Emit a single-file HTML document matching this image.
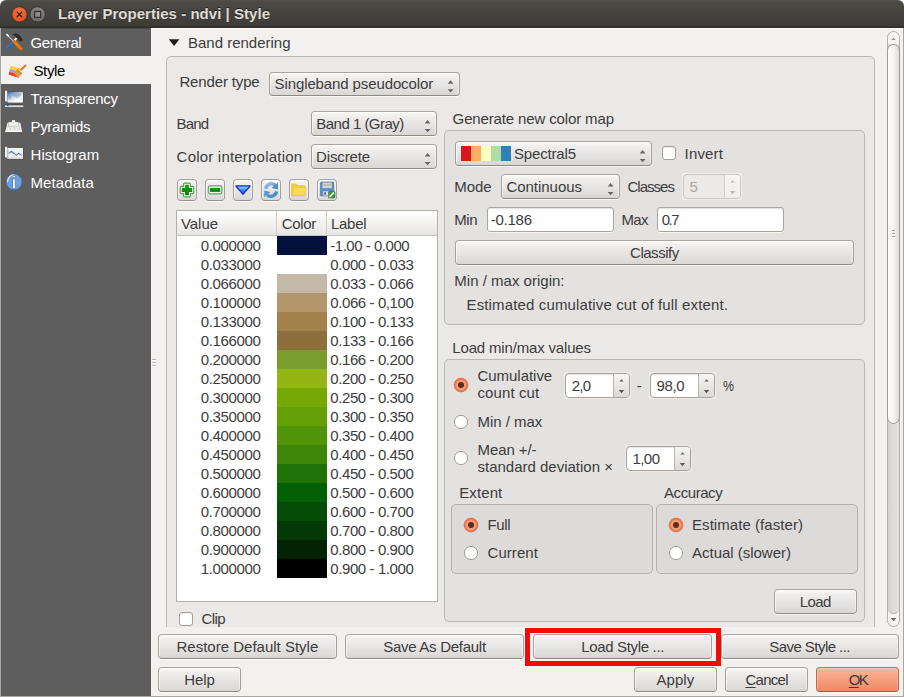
<!DOCTYPE html>
<html><head><meta charset="utf-8"><title>Layer Properties - ndvi | Style</title>
<style>
html,body{margin:0;padding:0}
body{width:904px;height:697px;position:relative;overflow:hidden;background:#f2f1f0;font-family:"Liberation Sans",sans-serif}
.t{position:absolute;height:20px;line-height:20px;white-space:pre}
u{text-decoration:underline;text-underline-offset:2px}
#title{position:absolute;left:0;top:0;width:904px;height:28px;background:linear-gradient(#52514b 0,#4b4a45 2px,#3c3b37 26px,#2e2d2a 27px,#2e2d2a 28px);border-radius:6px 6px 0 0}
.wb{position:absolute;top:6px;width:16px;height:16px;border-radius:50%;box-sizing:border-box}
.wb svg{position:absolute;left:-1px;top:-1px}
.close{left:11px;background:radial-gradient(circle at 50% 30%,#f0693e,#e64c1b);border:1px solid #3a2a22;top:6px}
.maxi{left:29px;background:linear-gradient(#85837d,#6c6a65);border:1px solid #33322e}
#side{position:absolute;left:0;top:28px;width:151px;height:669px;background:#5e5e5e}
#sel{position:absolute;left:0;top:56px;width:151px;height:28px;background:#f2f1f0}
#gb0{position:absolute;left:166px;top:56px;width:709px;height:600px;background:#eae9e8;border:1px solid #bcbab6;border-radius:5px;box-sizing:border-box}
.gb1{position:absolute;background:#e3e2e1;border:1px solid #b9b7b3;border-radius:5px;box-sizing:border-box}
.gb2{position:absolute;background:#dcdbda;border:1px solid #b4b2ae;border-radius:5px;box-sizing:border-box}
.btn{position:absolute;box-sizing:border-box;border:1px solid;border-color:#a9a59f #a4a09a #8e8a84;border-radius:4px;background:linear-gradient(#fafaf9 0,#f0efee 18%,#e5e3e1 60%,#d9d7d4 100%);box-shadow:inset 1px 1px 0 rgba(255,255,255,.65),inset -1px 0 0 rgba(255,255,255,.45),0 1px 0 rgba(255,255,255,.75)}
.btn.tb{border-radius:4px;border-color:#a8a49e #a39f99 #95918b}
.btn.ok{border-color:#bb7257 #b66a4e #a65a3e;background:linear-gradient(#fcb69b 0,#f8a888 30%,#f39570 70%,#ef8a62 100%);box-shadow:inset 1px 1px 0 rgba(255,255,255,.25),inset -1px 0 0 rgba(255,255,255,.2),0 1px 0 rgba(255,255,255,.75)}
.inp{position:absolute;box-sizing:border-box;border:1px solid #aaa69f;border-radius:3px;background:#fff;box-shadow:inset 0 1px 1px rgba(0,0,0,.12),0 1px 0 rgba(255,255,255,.7)}
.halo{position:absolute;box-sizing:border-box;border-radius:2px;background:#ecebe9}
.halo.dis{background:#efeeed}
.spin{position:absolute;box-sizing:border-box;border:1px solid #a6a29b;border-radius:4px;background:#fff;box-shadow:inset 0 1px 1px rgba(0,0,0,.10)}
.spin.dis{background:#ebeae9;border-color:#cbc8c4;box-shadow:none}
.spb{position:absolute;box-sizing:border-box;border-left:1px solid #b9b5af;border-radius:0 3px 3px 0;background:linear-gradient(#f7f6f5,#e9e7e5 50%,#dcdad7)}
.spb.dis{border-left-color:#d0cdc9;background:linear-gradient(#f6f5f4,#efeeed)}
.chk{position:absolute;box-sizing:border-box;border:1px solid #a59f98;border-radius:3px;background:#fff;box-shadow:inset 0 1px 1px rgba(0,0,0,.08)}
.rad{position:absolute;width:14px;height:14px;box-sizing:border-box;border:1px solid #a19d96;border-radius:50%;background:linear-gradient(#fff,#f4f3f2)}
.rad.on{border-color:#b5532f;background:radial-gradient(circle,#f59a76 0,#ee7c53 70%,#e86f45 100%)}
.rad.on i{position:absolute;left:3px;top:3px;width:6px;height:6px;border-radius:50%;background:#4a2a1e}
#tbl{position:absolute;left:176px;top:210px;width:262px;height:392px;box-sizing:border-box;border:1px solid #b3afa9;background:#fff}
#th{position:absolute;left:177px;top:211px;width:260px;height:24px;background:linear-gradient(#ffffff,#f3f2f1 50%,#e6e5e3);border-bottom:1px solid #c4c1bc}
.vs{position:absolute;top:211px;width:1px;height:24px;background:#cfccc8}
.sw{position:absolute;left:277px;width:50px;height:19px}
#sbout{position:absolute;left:887px;top:31px;width:13px;height:596px;box-sizing:border-box;border:1px solid #b3afa9;border-radius:7px;background:#f5f4f3}
#sbtrack{position:absolute;left:888px;top:44px;width:11px;height:570px;box-sizing:border-box;border-radius:0 0 6px 6px;border-bottom:1px solid #b9b5af;background:linear-gradient(90deg,#d4d1ce,#dedbd8 50%,#e3e1de)}
#sbthumb{position:absolute;left:887px;top:44px;width:13px;height:380px;box-sizing:border-box;border:1px solid #9f9b95;border-radius:7px;background:linear-gradient(90deg,#ffffff,#f4f3f2 50%,#dfddda)}
#foot{position:absolute;left:152px;top:627px;width:751px;height:69px;background:#f2f1f0}
#red{position:absolute;left:525px;top:628px;width:196px;height:38px;box-sizing:border-box;border:5px solid #f00a0a}
#frame{position:absolute;left:0;top:28px;width:904px;height:669px;box-sizing:border-box;border:1px solid #a9a7a2;border-top:none;pointer-events:none}
</style></head>
<body>
<div style="position:absolute;left:0;top:0;width:904px;height:8px;background:#fff"></div>
<div id="title"></div>
<div style="position:absolute;left:151px;top:28px;width:752px;height:1px;background:#fcfcfb"></div>
<svg style="position:absolute;left:8px;top:3px" width="42" height="23" viewBox="8 3 42 23"><defs><radialGradient id="gcl" cx="0.5" cy="0.3" r="0.8"><stop offset="0" stop-color="#f3744a"/><stop offset="1" stop-color="#e2491a"/></radialGradient><linearGradient id="gmx" x1="0" y1="0" x2="0" y2="1"><stop offset="0" stop-color="#8a8882"/><stop offset="1" stop-color="#6b6964"/></linearGradient></defs><circle cx="19.45" cy="14.4" r="7.7" fill="url(#gcl)" stroke="#35302b" stroke-width="0.9"/><path d="M16.7 11.6 L22.2 17.2 M22.2 11.6 L16.7 17.2" stroke="#3a140a" stroke-width="1.3" fill="none"/><circle cx="37.6" cy="14.4" r="7.7" fill="url(#gmx)" stroke="#302f2b" stroke-width="0.9"/><rect x="34.6" y="11.4" width="6" height="6" fill="#8e8c86" stroke="#32312d" stroke-width="1.2"/></svg>
<span class="t" style="left:58px;top:4px;font-size:15px;color:#dfdbd2;font-weight:700;letter-spacing:0.035px;text-shadow:0 -1px 0 rgba(0,0,0,.5);">Layer Properties - ndvi | Style</span>
<div id="side"></div>
<div style="position:absolute;left:0;top:28px;width:151px;height:1px;background:#4e4e4e"></div>
<div id="sel"></div>
<span class="t" style="left:30.5px;top:32.5px;font-size:15px;color:#fff;letter-spacing:-0.362px;">General</span>
<span class="t" style="left:33.4px;top:60.5px;font-size:15px;color:#000;letter-spacing:-0.340px;">Style</span>
<span class="t" style="left:30.5px;top:88.5px;font-size:15px;color:#fff;letter-spacing:-0.341px;">Transparency</span>
<span class="t" style="left:30.5px;top:116.5px;font-size:15px;color:#fff;letter-spacing:-0.345px;">Pyramids</span>
<span class="t" style="left:30.5px;top:144.5px;font-size:15px;color:#fff;letter-spacing:0.043px;">Histogram</span>
<span class="t" style="left:30.5px;top:172.5px;font-size:15px;color:#fff;letter-spacing:0.108px;">Metadata</span>
<svg style="position:absolute;left:0;top:28px" width="30" height="168" viewBox="0 28 30 168">
<defs>
<linearGradient id="gtr" x1="0" y1="0" x2="0.7" y2="1"><stop offset="0" stop-color="#3565b2"/><stop offset="0.3" stop-color="#8aa5cd"/><stop offset="0.6" stop-color="#dfe5ec"/><stop offset="0.85" stop-color="#ffffff"/></linearGradient>
<linearGradient id="gbl" x1="0" y1="0" x2="1" y2="1"><stop offset="0" stop-color="#4f86c6"/><stop offset="1" stop-color="#1f4a8a"/></linearGradient>
</defs>
<!-- General: hammer + screwdriver -->
<path d="M12.2 34.2 C15.5 32.4 19.6 33.6 21.3 37.6 L22.6 39.8 L22.2 41 L20.2 41.6 L18.6 40.4 C18.6 39.2 17.8 38.3 16.8 38.2 L15.4 36.6 C14.6 35.4 13.4 34.8 12.2 34.2 Z" fill="#2b2e30"/>
<path d="M13.6 41.4 L16.6 38.2" stroke="#f4f4f2" stroke-width="1.9" stroke-linecap="butt"/>
<path d="M13 42.8 L7.7 48.2" stroke="url(#gbl)" stroke-width="3.1" stroke-linecap="round"/>
<path d="M7.6 35.4 L13.2 40.9" stroke="#f2f2f2" stroke-width="0.9"/>
<path d="M6.9 34.5 L8.3 35.9" stroke="#ffffff" stroke-width="1.7" stroke-linecap="round"/>
<path d="M14 41.4 L21 48.7" stroke="#f47408" stroke-width="3.1" stroke-linecap="round"/>
<!-- Style: flag + brush -->
<path d="M10.4 65.8 L20.8 68.6 L20.2 71.6 L9.8 69 Z" fill="#fbd037"/>
<path d="M9.8 69 L20.2 71.6 L19.6 74.4 L9.2 71.8 Z" fill="#a2a4c6"/>
<path d="M9.2 71.8 L19.6 74.4 L18.6 77.8 L8.8 74.8 Z" fill="#ee3b2c"/>
<path d="M21.2 69.6 L25.4 65.6" stroke="#d38a32" stroke-width="2.2" stroke-linecap="round"/>
<path d="M17.4 69.2 L22.2 73.6 L18.2 77.8 L13.8 73.2 Z" fill="#e3994a"/>
<path d="M17.4 69.2 L22.2 73.6 L21.4 74.6 L16.6 70.2 Z" fill="#cf8228"/>
<!-- Transparency -->
<rect x="6.8" y="91.2" width="16.8" height="12" fill="#4e4e4e"/>
<rect x="7.4" y="91.8" width="15.6" height="10.8" fill="url(#gtr)"/>
<path d="M13.2 94.4 q1.6 -1.2 3.4 -0.6 q1.8 -1 3.6 -0.4 q1.4 0.6 0.8 2 q-0.8 1.4 -2.4 1.2 q-0.6 1.6 -1.8 2.2 q-1 -0.6 -1 -2 q-1.6 -0.2 -2.6 -1 z M9.2 96.2 q1 -0.6 1.8 0.2 q0.4 1.6 -0.4 3 q-1 -0.6 -1.2 -1.6 z M20.4 98.6 q0.8 -0.4 1.2 0.4 q-0.2 0.9 -1 0.9 z" fill="#8d9ca6" opacity="0.55"/>
<rect x="5" y="90.8" width="2.2" height="10.6" fill="#efefef"/>
<rect x="5" y="104" width="18.4" height="3" fill="#4a4a4a"/>
<rect x="5" y="105.2" width="18.4" height="1.9" fill="#d4d4d4"/>
<rect x="7" y="103.2" width="1.4" height="3" fill="#2c54a0"/>
<!-- Pyramids -->
<path d="M7.4 122.8 L20.4 122.8 L22.2 132 L5.2 132 Z" fill="#e9e9e7"/>
<path d="M8.6 122 L18.4 122 L18.4 126.2 L8.6 126.2 Z" fill="#f1f1ef" stroke="#9c9c9a" stroke-width="0.5"/>
<path d="M11.9 121 C11.9 119.6 15.2 119.6 15.2 121 L15.2 122.3 L11.9 122.3 Z" fill="#f4f4f2"/>
<path d="M5.6 130.6 L21.8 130.6 L22.2 132 L5.2 132 Z" fill="#fafaf8"/>
<path d="M10.2 127.5 L10.6 130 M14.6 127 L14.6 130 M19.4 127.5 L19 130" stroke="#c4c4c2" stroke-width="0.8"/>
<!-- Histogram -->
<rect x="6.8" y="147.2" width="16.8" height="12.2" fill="#4c4c4c"/>
<rect x="7.4" y="147.9" width="15.6" height="11" fill="#f3f3f2"/>
<rect x="7.4" y="157.6" width="15.6" height="1.3" fill="#d2d2d0"/>
<rect x="5" y="146.8" width="2.2" height="10.6" fill="#efefef"/>
<rect x="7.2" y="148.6" width="1.2" height="9" fill="#bdbdbb"/>
<path d="M8.6 153.7 L11.3 151.3 L13.7 153 L16.5 155.3 L18.7 153.2 L21.7 155.4" fill="none" stroke="#5b7db9" stroke-width="1.1"/>
<!-- Metadata -->
<circle cx="14.1" cy="181.9" r="8" fill="#6f9fd8" stroke="#3b68ab" stroke-width="0.9"/>
<path d="M7.6 181.5 C7.8 177.6 10.6 175 13.4 174.8" fill="none" stroke="#e6eefa" stroke-width="1.1" stroke-linecap="round"/>
<rect x="12.6" y="178.9" width="2.9" height="9.6" fill="#3f6fb3"/>
<rect x="13" y="179.3" width="2.1" height="8.9" fill="#f4f2ee"/>
<rect x="12.8" y="175.3" width="2.5" height="2.1" fill="#3f6fb3" rx="0.5"/>
<rect x="13.1" y="175.7" width="1.9" height="1.5" fill="#f4f2ee"/>
</svg>

<div id="gb0"></div>
<svg style="position:absolute;left:168px;top:38px" width="13" height="9" viewBox="168 38 13 9"><path d="M168.8 39.2 L179.4 39.2 L174.1 46 Z" fill="#1c1c1c"/></svg>
<span class="t" style="left:188px;top:32.5px;font-size:15px;color:#3c3c3c;letter-spacing:-0.006px;">Band rendering</span>
<span class="t" style="left:179.4px;top:72px;font-size:15px;color:#3c3c3c;letter-spacing:-0.142px;">Render type</span>
<div class="btn" style="left:269px;top:72px;width:191px;height:24px;"></div>
<svg style="position:absolute;left:444px;top:72px" width="14" height="24" viewBox="444 72 14 24"><path d="M450.6 80.2 L453.5 83.7 L447.70000000000005 83.7 Z M447.70000000000005 89.2 L453.5 89.2 L450.6 92.6 Z" fill="#666666"/></svg>
<span class="t" style="left:274.6px;top:74px;font-size:15px;color:#3c3c3c;letter-spacing:-0.113px;">Singleband pseudocolor</span>
<span class="t" style="left:176.6px;top:114px;font-size:15px;color:#3c3c3c;letter-spacing:-0.849px;">Band</span>
<div class="btn" style="left:311px;top:111px;width:126px;height:25px;"></div>
<svg style="position:absolute;left:421px;top:111px" width="14" height="25" viewBox="421 111 14 25"><path d="M427.6 119.9 L430.5 123.4 L424.70000000000005 123.4 Z M424.70000000000005 128.9 L430.5 128.9 L427.6 132.3 Z" fill="#666666"/></svg>
<span class="t" style="left:316.3px;top:113.5px;font-size:15px;color:#3c3c3c;letter-spacing:-0.518px;">Band 1 (Gray)</span>
<span class="t" style="left:176.6px;top:147px;font-size:15px;color:#3c3c3c;letter-spacing:0.208px;">Color interpolation</span>
<div class="btn" style="left:311px;top:144px;width:126px;height:25px;"></div>
<svg style="position:absolute;left:421px;top:144px" width="14" height="25" viewBox="421 144 14 25"><path d="M427.6 152.9 L430.5 156.4 L424.70000000000005 156.4 Z M424.70000000000005 161.9 L430.5 161.9 L427.6 165.3 Z" fill="#666666"/></svg>
<span class="t" style="left:316px;top:146.5px;font-size:15px;color:#3c3c3c;letter-spacing:-0.131px;">Discrete</span>
<div class="btn tb" style="left:177px;top:179px;width:20px;height:22px;"></div>
<div class="btn tb" style="left:205px;top:179px;width:20px;height:22px;"></div>
<div class="btn tb" style="left:233px;top:179px;width:20px;height:22px;"></div>
<div class="btn tb" style="left:261px;top:179px;width:20px;height:22px;"></div>
<div class="btn tb" style="left:289px;top:179px;width:20px;height:22px;"></div>
<div class="btn tb" style="left:317px;top:179px;width:20px;height:22px;"></div>
<svg style="position:absolute;left:177px;top:179px" width="162" height="22" viewBox="177 179 162 22">
<defs>
<linearGradient id="gg" x1="0" y1="0" x2="0" y2="1"><stop offset="0" stop-color="#12a612"/><stop offset="1" stop-color="#067c06"/></linearGradient>
<linearGradient id="gb" x1="0" y1="0" x2="0" y2="1"><stop offset="0" stop-color="#62b6ff"/><stop offset="0.5" stop-color="#2f8cff"/><stop offset="1" stop-color="#1668f6"/></linearGradient>
<linearGradient id="gr" x1="0" y1="0" x2="1" y2="1"><stop offset="0" stop-color="#9cc4ec"/><stop offset="1" stop-color="#4785cc"/></linearGradient>
</defs>
<!-- plus -->
<path d="M184.6 183.1 h4.8 q1 0 1 1 v2.3 h2.3 q1 0 1 1 v5.2 q0 1 -1 1 h-2.3 v2.3 q0 1 -1 1 h-4.8 q-1 0 -1 -1 v-2.3 h-2.3 q-1 0 -1 -1 v-5.2 q0 -1 1 -1 h2.3 v-2.3 q0 -1 1 -1 z" fill="#f4fbf4" stroke="#55a655" stroke-width="1.2"/>
<path d="M185.1 184.8 h3.8 v3.2 h3.3 v4.1 h-3.3 v3.2 h-3.8 v-3.2 h-3.3 v-4.1 h3.3 z" fill="url(#gg)"/>
<!-- minus -->
<rect x="208.3" y="185.9" width="13.6" height="8" rx="1.8" fill="#f4fbf4" stroke="#5aa85a" stroke-width="1.2"/>
<rect x="209.9" y="187.9" width="10.3" height="4" fill="url(#gg)"/>
<!-- triangle -->
<path d="M235.9 186 L250.1 186 L243 194.2 Z" fill="url(#gb)" stroke="#1a30c4" stroke-width="1.3" stroke-linejoin="round"/><path d="M237.4 186.6 L248.6 186.6 L246.4 189 L239.6 189 Z" fill="#9ad6ff" opacity="0.5"/>
<!-- refresh -->
<path d="M265.6 188.6 A6 6 0 0 1 275.2 185" fill="none" stroke="url(#gr)" stroke-width="3.3"/>
<path d="M277.9 182.6 L277.9 189.4 L271.6 188 Z" fill="#4a88cf"/>
<path d="M276.6 191.4 A6 6 0 0 1 267 195" fill="none" stroke="#4f8dd2" stroke-width="3.3"/>
<path d="M264.2 197.2 L264.2 190.4 L270.6 192 Z" fill="#5a95d6"/>
<!-- folder -->
<path d="M291.6 184.6 q0 -0.7 0.7 -0.7 h3.6 l1 1.7 h7.4 q0.6 0 0.6 0.6 v9.4 h-13.3 z" fill="#f7cf3d" stroke="#e1bb2e" stroke-width="0.6"/>
<path d="M293.9 187.6 h12.4 l-2 8.1 h-12.7 z" fill="#fcdc55" stroke="#e3c038" stroke-width="0.6" stroke-linejoin="round"/>
<!-- save -->
<rect x="320.4" y="182" width="13.3" height="13.9" rx="1" fill="#5b8cc9" stroke="#3f6dab" stroke-width="0.6"/>
<rect x="322.5" y="182.6" width="9.3" height="5.6" fill="#d6d6d4"/>
<rect x="322.5" y="184.2" width="9.3" height="1.6" fill="#b9b9b7"/>
<rect x="323.2" y="191.4" width="7" height="4.2" fill="#e9e9e9"/>
<rect x="324.3" y="192.2" width="1.6" height="2.6" fill="#2f4f7d"/>
<rect x="328.3" y="191.3" width="6.8" height="6.8" rx="1.4" fill="#428f42" stroke="#2f7a2f" stroke-width="0.5"/>
<path d="M330 196.4 L333.6 192.9" stroke="#ffffff" stroke-width="1.5" stroke-linecap="round"/>
</svg>

<div id="tbl"></div>
<div id="th"></div>
<div class="vs" style="left:276px"></div><div class="vs" style="left:326px"></div>
<span class="t" style="left:180.9px;top:213.5px;font-size:15px;color:#3c3c3c;letter-spacing:-0.016px;">Value</span>
<span class="t" style="left:281.8px;top:213.5px;font-size:15px;color:#3c3c3c;letter-spacing:-0.340px;">Color</span>
<span class="t" style="left:330.9px;top:213.5px;font-size:15px;color:#3c3c3c;letter-spacing:-0.226px;">Label</span>
<div class="sw" style="top:236px;background:#03103d"></div>
<span class="t" style="left:200.8px;top:235.8px;font-size:15px;color:#3c3c3c;letter-spacing:-0.368px;">0.000000</span>
<span class="t" style="left:330.3px;top:235.8px;font-size:15px;color:#3c3c3c;letter-spacing:-0.480px;">-1.00 - 0.000</span>
<span class="t" style="left:200.8px;top:254.8px;font-size:15px;color:#3c3c3c;letter-spacing:-0.368px;">0.033000</span>
<span class="t" style="left:330.3px;top:254.8px;font-size:15px;color:#3c3c3c;letter-spacing:-0.409px;">0.000 - 0.033</span>
<div class="sw" style="top:274px;background:#c4b8a8"></div>
<span class="t" style="left:200.8px;top:273.8px;font-size:15px;color:#3c3c3c;letter-spacing:-0.368px;">0.066000</span>
<span class="t" style="left:330.3px;top:273.8px;font-size:15px;color:#3c3c3c;letter-spacing:-0.409px;">0.033 - 0.066</span>
<div class="sw" style="top:293px;background:#b4966c"></div>
<span class="t" style="left:200.8px;top:292.8px;font-size:15px;color:#3c3c3c;letter-spacing:-0.368px;">0.100000</span>
<span class="t" style="left:330.3px;top:292.8px;font-size:15px;color:#3c3c3c;letter-spacing:-0.409px;">0.066 - 0,100</span>
<div class="sw" style="top:312px;background:#a2824a"></div>
<span class="t" style="left:200.8px;top:311.8px;font-size:15px;color:#3c3c3c;letter-spacing:-0.368px;">0.133000</span>
<span class="t" style="left:330.3px;top:311.8px;font-size:15px;color:#3c3c3c;letter-spacing:-0.409px;">0.100 - 0.133</span>
<div class="sw" style="top:331px;background:#8e6e3a"></div>
<span class="t" style="left:200.8px;top:330.8px;font-size:15px;color:#3c3c3c;letter-spacing:-0.368px;">0.166000</span>
<span class="t" style="left:330.3px;top:330.8px;font-size:15px;color:#3c3c3c;letter-spacing:-0.409px;">0.133 - 0.166</span>
<div class="sw" style="top:350px;background:#7a9e2e"></div>
<span class="t" style="left:200.8px;top:349.8px;font-size:15px;color:#3c3c3c;letter-spacing:-0.368px;">0.200000</span>
<span class="t" style="left:330.3px;top:349.8px;font-size:15px;color:#3c3c3c;letter-spacing:-0.409px;">0.166 - 0.200</span>
<div class="sw" style="top:369px;background:#94b614"></div>
<span class="t" style="left:200.8px;top:368.8px;font-size:15px;color:#3c3c3c;letter-spacing:-0.368px;">0.250000</span>
<span class="t" style="left:330.3px;top:368.8px;font-size:15px;color:#3c3c3c;letter-spacing:-0.409px;">0.200 - 0.250</span>
<div class="sw" style="top:388px;background:#74a804"></div>
<span class="t" style="left:200.8px;top:387.8px;font-size:15px;color:#3c3c3c;letter-spacing:-0.368px;">0.300000</span>
<span class="t" style="left:330.3px;top:387.8px;font-size:15px;color:#3c3c3c;letter-spacing:-0.409px;">0.250 - 0.300</span>
<div class="sw" style="top:407px;background:#64a004"></div>
<span class="t" style="left:200.8px;top:406.8px;font-size:15px;color:#3c3c3c;letter-spacing:-0.368px;">0.350000</span>
<span class="t" style="left:330.3px;top:406.8px;font-size:15px;color:#3c3c3c;letter-spacing:-0.409px;">0.300 - 0.350</span>
<div class="sw" style="top:426px;background:#529408"></div>
<span class="t" style="left:200.8px;top:425.8px;font-size:15px;color:#3c3c3c;letter-spacing:-0.368px;">0.400000</span>
<span class="t" style="left:330.3px;top:425.8px;font-size:15px;color:#3c3c3c;letter-spacing:-0.409px;">0.350 - 0.400</span>
<div class="sw" style="top:445px;background:#3e8608"></div>
<span class="t" style="left:200.8px;top:444.8px;font-size:15px;color:#3c3c3c;letter-spacing:-0.368px;">0.450000</span>
<span class="t" style="left:330.3px;top:444.8px;font-size:15px;color:#3c3c3c;letter-spacing:-0.409px;">0.400 - 0.450</span>
<div class="sw" style="top:464px;background:#1e7208"></div>
<span class="t" style="left:200.8px;top:463.8px;font-size:15px;color:#3c3c3c;letter-spacing:-0.368px;">0.500000</span>
<span class="t" style="left:330.3px;top:463.8px;font-size:15px;color:#3c3c3c;letter-spacing:-0.409px;">0.450 - 0.500</span>
<div class="sw" style="top:483px;background:#046004"></div>
<span class="t" style="left:200.8px;top:482.8px;font-size:15px;color:#3c3c3c;letter-spacing:-0.368px;">0.600000</span>
<span class="t" style="left:330.3px;top:482.8px;font-size:15px;color:#3c3c3c;letter-spacing:-0.409px;">0.500 - 0.600</span>
<div class="sw" style="top:502px;background:#044c08"></div>
<span class="t" style="left:200.8px;top:501.8px;font-size:15px;color:#3c3c3c;letter-spacing:-0.368px;">0.700000</span>
<span class="t" style="left:330.3px;top:501.8px;font-size:15px;color:#3c3c3c;letter-spacing:-0.409px;">0.600 - 0.700</span>
<div class="sw" style="top:521px;background:#043a08"></div>
<span class="t" style="left:200.8px;top:520.8px;font-size:15px;color:#3c3c3c;letter-spacing:-0.368px;">0.800000</span>
<span class="t" style="left:330.3px;top:520.8px;font-size:15px;color:#3c3c3c;letter-spacing:-0.409px;">0.700 - 0.800</span>
<div class="sw" style="top:540px;background:#042204"></div>
<span class="t" style="left:200.8px;top:539.8px;font-size:15px;color:#3c3c3c;letter-spacing:-0.368px;">0.900000</span>
<span class="t" style="left:330.3px;top:539.8px;font-size:15px;color:#3c3c3c;letter-spacing:-0.409px;">0.800 - 0.900</span>
<div class="sw" style="top:559px;background:#000000"></div>
<span class="t" style="left:200.8px;top:558.8px;font-size:15px;color:#3c3c3c;letter-spacing:-0.368px;">1.000000</span>
<span class="t" style="left:330.3px;top:558.8px;font-size:15px;color:#3c3c3c;letter-spacing:-0.409px;">0.900 - 1.000</span>
<div class="chk" style="left:179px;top:612px;width:14px;height:14px;"></div>
<span class="t" style="left:201.4px;top:609px;font-size:15px;color:#3c3c3c;letter-spacing:-0.548px;">Clip</span>
<span class="t" style="left:452.6px;top:109px;font-size:15px;color:#3c3c3c;letter-spacing:-0.136px;">Generate new color map</span>
<div class="gb1" style="left:444px;top:130px;width:421px;height:195px"></div>
<div class="btn" style="left:455px;top:141px;width:197px;height:25px;"></div>
<svg style="position:absolute;left:636px;top:141px" width="14" height="25" viewBox="636 141 14 25"><path d="M642.6 149.9 L645.5 153.4 L639.7 153.4 Z M639.7 158.9 L645.5 158.9 L642.6 162.3 Z" fill="#666666"/></svg>
<div style="position:absolute;left:461px;top:146px;width:10px;height:15px;background:#d7191c"></div>
<div style="position:absolute;left:471px;top:146px;width:10px;height:15px;background:#fdae61"></div>
<div style="position:absolute;left:481px;top:146px;width:10px;height:15px;background:#ffffbf"></div>
<div style="position:absolute;left:491px;top:146px;width:10px;height:15px;background:#abdda4"></div>
<div style="position:absolute;left:501px;top:146px;width:10px;height:15px;background:#2b83ba"></div>
<span class="t" style="left:514px;top:143.5px;font-size:15px;color:#3c3c3c;letter-spacing:-0.172px;">Spectral5</span>
<div class="chk" style="left:662px;top:146px;width:14px;height:14px;"></div>
<span class="t" style="left:684.6px;top:143.5px;font-size:15px;color:#3c3c3c;letter-spacing:0.137px;">Invert</span>
<span class="t" style="left:454.3px;top:177px;font-size:15px;color:#3c3c3c;letter-spacing:-0.110px;">Mode</span>
<div class="btn" style="left:501px;top:174px;width:119px;height:25px;"></div>
<svg style="position:absolute;left:604px;top:174px" width="14" height="25" viewBox="604 174 14 25"><path d="M610.6 182.9 L613.5 186.4 L607.7 186.4 Z M607.7 191.9 L613.5 191.9 L610.6 195.3 Z" fill="#666666"/></svg>
<span class="t" style="left:506.4px;top:177px;font-size:15px;color:#3c3c3c;letter-spacing:-0.021px;">Continuous</span>
<span class="t" style="left:627.5px;top:177px;font-size:15px;color:#3c3c3c;letter-spacing:-0.977px;">Classes</span>
<div class="halo dis" style="left:682px;top:173px;width:60px;height:27px;"></div>
<div class="spin dis" style="left:683px;top:174px;width:58px;height:25px;"></div>
<div class="spb dis" style="left:724px;top:175px;width:16px;height:23px;"></div>
<svg style="position:absolute;left:724px;top:174px" width="17" height="25" viewBox="724 174 17 25"><path d="M732.5 180.3 L734.6 182.6 L730.4 182.6 Z M729.8 191 L735.2 191 L732.5 194.2 Z" fill="#bab8b5"/></svg>
<span class="t" style="left:689.6px;top:177px;font-size:15px;color:#a9a7a4;">5</span>
<span class="t" style="left:454.3px;top:209.5px;font-size:15px;color:#3c3c3c;letter-spacing:-0.486px;">Min</span>
<div class="inp" style="left:487px;top:207px;width:127px;height:25px;"></div>
<span class="t" style="left:490.8px;top:209.5px;font-size:15px;color:#3c3c3c;letter-spacing:-0.269px;">-0.186</span>
<span class="t" style="left:621.5px;top:209.5px;font-size:15px;color:#3c3c3c;letter-spacing:-0.722px;">Max</span>
<div class="inp" style="left:657px;top:207px;width:127px;height:25px;"></div>
<span class="t" style="left:661.7px;top:209.5px;font-size:15px;color:#3c3c3c;letter-spacing:-1.480px;">0.7</span>
<div class="btn" style="left:455px;top:240px;width:399px;height:25px;"></div>
<span class="t" style="left:504.4px;width:300px;text-align:center;top:242.5px;font-size:15px;color:#3c3c3c;letter-spacing:-0.474px;">Classify</span>
<span class="t" style="left:454.3px;top:271px;font-size:15px;color:#3c3c3c;letter-spacing:0.010px;">Min / max origin:</span>
<span class="t" style="left:466.5px;top:295px;font-size:15px;color:#3c3c3c;letter-spacing:0.142px;">Estimated cumulative cut of full extent.</span>
<span class="t" style="left:452.3px;top:337.5px;font-size:15px;color:#3c3c3c;letter-spacing:-0.169px;">Load min/max values</span>
<div class="gb1" style="left:444px;top:359px;width:421px;height:263px"></div>
<svg style="position:absolute;left:452px;top:375.8px" width="18" height="18" viewBox="-9 -9 18 18"><circle r="6.9" fill="#ee794a" stroke="#dd6535" stroke-width="0.7"/><circle r="5.2" fill="#f49c77"/><circle r="3" fill="#5f2e1c"/></svg>
<span class="t" style="left:477.5px;top:366.4px;font-size:15px;color:#3c3c3c;letter-spacing:-0.037px;">Cumulative</span>
<span class="t" style="left:477.5px;top:383.3px;font-size:15px;color:#3c3c3c;letter-spacing:0.103px;">count cut</span>
<div class="halo" style="left:564px;top:372px;width:67px;height:27px;"></div>
<div class="spin" style="left:565px;top:373px;width:65px;height:25px;"></div>
<div class="spb" style="left:613px;top:374px;width:16px;height:23px;"></div>
<svg style="position:absolute;left:613px;top:373px" width="17" height="25" viewBox="613 373 17 25"><path d="M621.5 379.3 L623.6 381.6 L619.4 381.6 Z M618.8 390 L624.2 390 L621.5 393.2 Z" fill="#5a5a5a"/></svg>
<span class="t" style="left:571.8px;top:375.5px;font-size:15px;color:#3c3c3c;letter-spacing:-0.780px;">2,0</span>
<span class="t" style="left:636.8px;top:375.5px;font-size:15px;color:#3c3c3c;">-</span>
<div class="halo" style="left:649px;top:372px;width:67px;height:27px;"></div>
<div class="spin" style="left:650px;top:373px;width:65px;height:25px;"></div>
<div class="spb" style="left:698px;top:374px;width:16px;height:23px;"></div>
<svg style="position:absolute;left:698px;top:373px" width="17" height="25" viewBox="698 373 17 25"><path d="M706.5 379.3 L708.6 381.6 L704.4 381.6 Z M703.8 390 L709.2 390 L706.5 393.2 Z" fill="#5a5a5a"/></svg>
<span class="t" style="left:656.4px;top:375.5px;font-size:15px;color:#3c3c3c;letter-spacing:-0.334px;">98,0</span>
<span class="t" style="left:722.8px;top:375.5px;font-size:15px;color:#3c3c3c;transform:scaleX(0.824);transform-origin:0 50%;">%</span>
<svg style="position:absolute;left:452px;top:413px" width="18" height="18" viewBox="-9 -9 18 18"><circle r="6.6" fill="#ffffff" stroke="#9c918a" stroke-width="0.9"/></svg>
<span class="t" style="left:477.5px;top:411.8px;font-size:15px;color:#3c3c3c;letter-spacing:-0.039px;">Min / max</span>
<svg style="position:absolute;left:452px;top:449px" width="18" height="18" viewBox="-9 -9 18 18"><circle r="6.6" fill="#ffffff" stroke="#9c918a" stroke-width="0.9"/></svg>
<span class="t" style="left:477.5px;top:440px;font-size:15px;color:#3c3c3c;letter-spacing:-0.089px;">Mean +/-</span>
<span class="t" style="left:477.5px;top:456.5px;font-size:15px;color:#3c3c3c;letter-spacing:-0.006px;">standard deviation ×</span>
<div class="halo" style="left:625px;top:445px;width:67px;height:27px;"></div>
<div class="spin" style="left:626px;top:446px;width:65px;height:25px;"></div>
<div class="spb" style="left:674px;top:447px;width:16px;height:23px;"></div>
<svg style="position:absolute;left:674px;top:446px" width="17" height="25" viewBox="674 446 17 25"><path d="M682.5 452.3 L684.6 454.6 L680.4 454.6 Z M679.8 463 L685.2 463 L682.5 466.2 Z" fill="#5a5a5a"/></svg>
<span class="t" style="left:632.5px;top:448.5px;font-size:15px;color:#3c3c3c;letter-spacing:-0.568px;">1,00</span>
<span class="t" style="left:459.2px;top:482.5px;font-size:15px;color:#3c3c3c;letter-spacing:0.114px;">Extent</span>
<div class="gb2" style="left:451px;top:504px;width:202px;height:70px"></div>
<span class="t" style="left:664px;top:482.5px;font-size:15px;color:#3c3c3c;letter-spacing:-0.427px;">Accuracy</span>
<div class="gb2" style="left:656px;top:504px;width:202px;height:70px"></div>
<svg style="position:absolute;left:462px;top:516px" width="18" height="18" viewBox="-9 -9 18 18"><circle r="6.9" fill="#ee794a" stroke="#dd6535" stroke-width="0.7"/><circle r="5.2" fill="#f49c77"/><circle r="3" fill="#5f2e1c"/></svg>
<span class="t" style="left:487.5px;top:514.5px;font-size:15px;color:#3c3c3c;letter-spacing:-0.324px;">Full</span>
<svg style="position:absolute;left:462px;top:544px" width="18" height="18" viewBox="-9 -9 18 18"><circle r="6.6" fill="#ffffff" stroke="#9c918a" stroke-width="0.9"/></svg>
<span class="t" style="left:487.5px;top:542.5px;font-size:15px;color:#3c3c3c;letter-spacing:0.061px;">Current</span>
<svg style="position:absolute;left:667px;top:516px" width="18" height="18" viewBox="-9 -9 18 18"><circle r="6.9" fill="#ee794a" stroke="#dd6535" stroke-width="0.7"/><circle r="5.2" fill="#f49c77"/><circle r="3" fill="#5f2e1c"/></svg>
<span class="t" style="left:692px;top:514.5px;font-size:15px;color:#3c3c3c;letter-spacing:0.061px;">Estimate (faster)</span>
<svg style="position:absolute;left:667px;top:544px" width="18" height="18" viewBox="-9 -9 18 18"><circle r="6.6" fill="#ffffff" stroke="#9c918a" stroke-width="0.9"/></svg>
<span class="t" style="left:692px;top:542.5px;font-size:15px;color:#3c3c3c;letter-spacing:-0.015px;">Actual (slower)</span>
<div class="btn" style="left:774px;top:589px;width:83px;height:25px;"></div>
<span class="t" style="left:665.3px;width:300px;text-align:center;top:591.5px;font-size:15px;color:#3c3c3c;letter-spacing:-0.525px;">Load</span>
<div id="sbout"></div><div id="sbtrack"></div><div id="sbthumb"></div>
<svg style="position:absolute;left:890px;top:36px" width="7" height="5" viewBox="890 36 7 5"><path d="M893.5 37.8 L895.7 40.1 L891.3 40.1 Z" fill="#8e8c88"/></svg>
<svg style="position:absolute;left:890px;top:617px" width="7" height="5" viewBox="0 0 7 5"><path d="M0.8 0.9 L6.2 0.9 L3.5 4.2 Z" fill="#686868"/></svg>
<div style="position:absolute;left:892px;top:230px;width:3px;height:1px;background:#9c9893;box-shadow:0 1px 0 #fff,0 3px 0 #9c9893,0 4px 0 #fff,0 6px 0 #9c9893,0 7px 0 #fff"></div>
<div style="position:absolute;left:152px;top:359px;width:4px;height:1px;background:#b9b5b0;box-shadow:0 1px 0 #fff,0 3px 0 #b9b5b0,0 4px 0 #fff,0 6px 0 #b9b5b0,0 7px 0 #fff"></div>
<div id="foot"></div>
<div class="btn" style="left:158px;top:634px;width:179px;height:25px;"></div>
<span class="t" style="left:97.4px;width:300px;text-align:center;top:636.5px;font-size:15px;color:#3c3c3c;letter-spacing:-0.002px;">Restore Default Style</span>
<div class="btn" style="left:345px;top:634px;width:179px;height:25px;"></div>
<span class="t" style="left:284.5px;width:300px;text-align:center;top:636.5px;font-size:15px;color:#3c3c3c;letter-spacing:-0.274px;">Save As Default</span>
<div class="btn" style="left:533px;top:634px;width:179px;height:25px;"></div>
<span class="t" style="left:472.70000000000005px;width:300px;text-align:center;top:636.5px;font-size:15px;color:#3c3c3c;letter-spacing:-0.336px;">Load Style ...</span>
<div class="btn" style="left:721px;top:634px;width:178px;height:25px;"></div>
<span class="t" style="left:659.6px;width:300px;text-align:center;top:636.5px;font-size:15px;color:#3c3c3c;letter-spacing:-0.544px;">Save Style ...</span>
<div id="red"></div>
<div class="btn" style="left:158px;top:667px;width:83px;height:25px;"></div>
<span class="t" style="left:49.5px;width:300px;text-align:center;top:669.5px;font-size:15px;color:#3c3c3c;letter-spacing:-0.120px;">Help</span>
<div class="btn" style="left:634px;top:667px;width:83px;height:25px;"></div>
<span class="t" style="left:525.4px;width:300px;text-align:center;top:669.5px;font-size:15px;color:#3c3c3c;letter-spacing:0.067px;">Apply</span>
<div class="btn" style="left:725px;top:667px;width:83px;height:25px;"></div>
<span class="t" style="left:616.6px;width:300px;text-align:center;top:669.5px;font-size:15px;color:#3c3c3c;letter-spacing:-0.721px;"><u>C</u>ancel</span>
<div class="btn ok" style="left:816px;top:667px;width:83px;height:25px;"></div>
<span class="t" style="left:707.9px;width:300px;text-align:center;top:669.5px;font-size:15px;color:#3c3c3c;letter-spacing:-1.788px;"><u>O</u>K</span>
<div id="frame"></div>
</body></html>
